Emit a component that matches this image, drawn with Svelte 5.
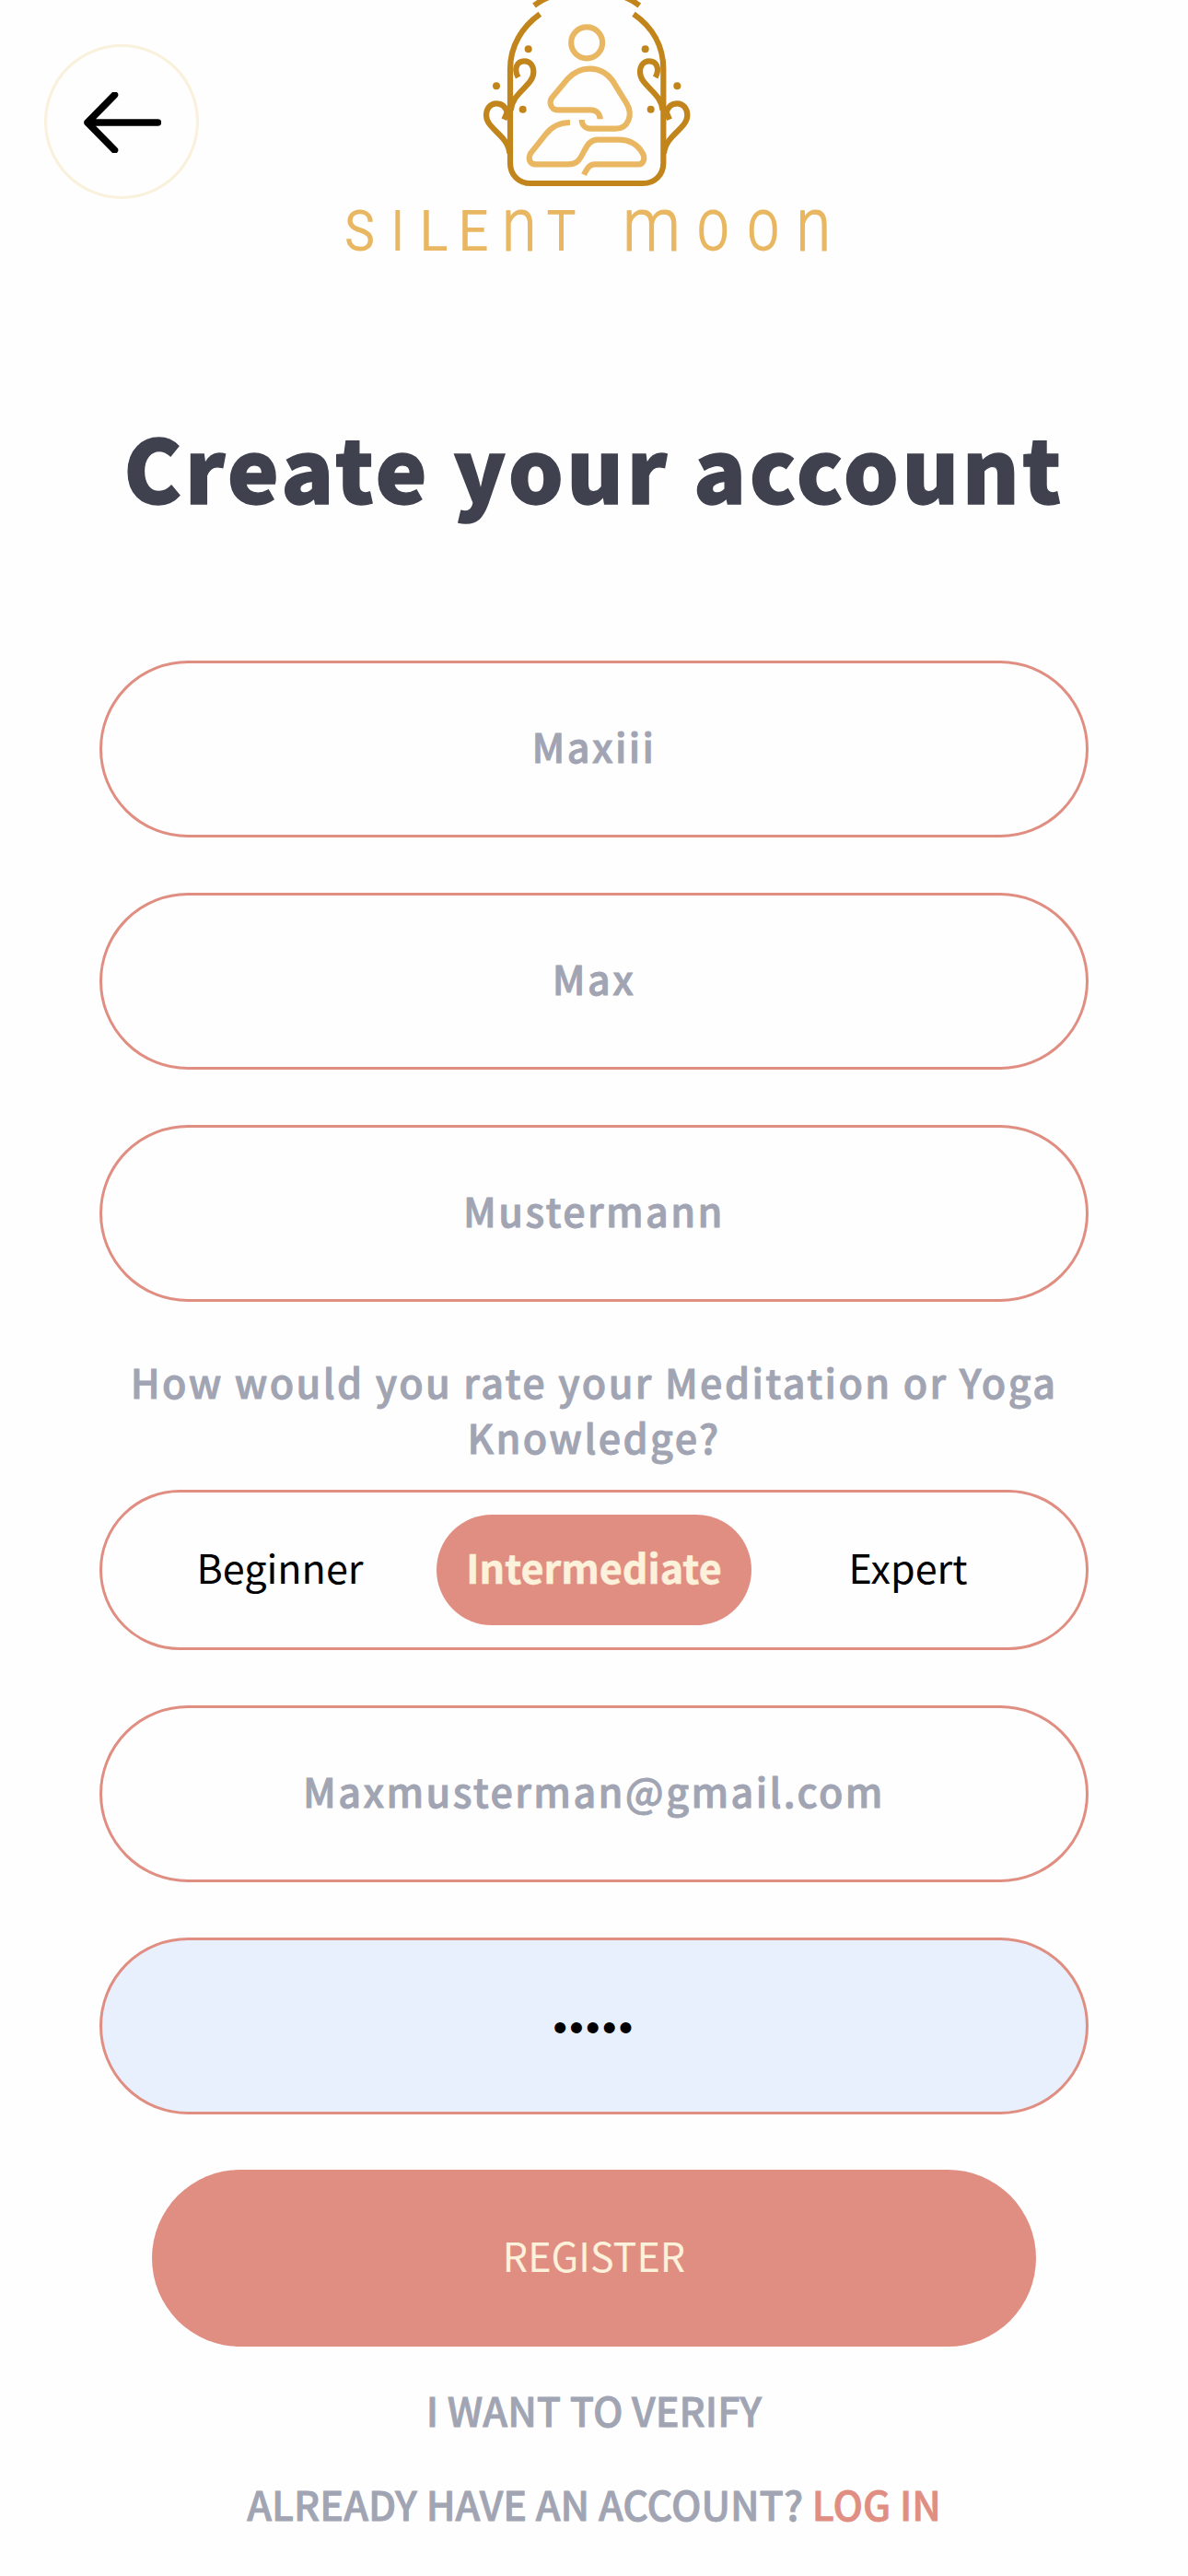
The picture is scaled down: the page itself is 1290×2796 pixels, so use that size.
<script>
  const letters = [
    { ch: 'S', x: 40.5, w: 33, size: 62 },
    { ch: 'I', x: 81.7, w: 14, size: 62 },
    { ch: 'L', x: 121, w: 31, size: 62 },
    { ch: 'E', x: 164, w: 33, size: 62 },
    { ch: 'n', x: 213.7, w: 38, size: 82 },
    { ch: 'T', x: 259.5, w: 32, size: 62 },
    { ch: 'm', x: 357.5, w: 63, size: 82 },
    { ch: 'O', x: 424.2, w: 36, size: 62 },
    { ch: 'O', x: 478.8, w: 36, size: 62 },
    { ch: 'n', x: 533.3, w: 38, size: 82 }
  ];
  const names = ['Maxiii', 'Max', 'Mustermann'];
  const levels = ['Beginner', 'Intermediate', 'Expert'];
  let level = $state('Intermediate');
</script>

<main>
  <header>
    <button class="back" aria-label="Back">
      <svg viewBox="0 0 84 66" width="84" height="66">
        <path d="M80.500 33H4M33.500 3L4 33L33.500 63" />
      </svg>
    </button>
    <svg class="logo" viewBox="0 0 570 290" width="570" height="290">
      <g transform="translate(150 0) scale(.33333)">
        <g class="dark">
          <path d="M259 46C200 88 162 150 162 225V530C162 570 190 597 228 597H595C632 597 661 570 661 530V225C661 150 625 88 564 46" />
          <path d="M240 18C262 2 275 -5 290 -10M583 18C561 2 548 -5 533 -10" />
          {#each ['', 'translate(823 0) scale(-1 1)'] as t}
            <g transform={t}>
              <path d="M188 252C172 222 185 199 208 199C228 199 238 215 238 235C238 280 168 300 164 360" />
              <path d="M142 389L152 366C146 345 132 337 117 337C97 337 84 353 84 375C84 420 156 440 160 500" />
              <circle class="dot" cx="221" cy="160" r="12" />
              <circle class="dot" cx="117" cy="280" r="12" />
              <circle class="dot" cx="203" cy="356" r="12" />
            </g>
          {/each}
        </g>
        <g class="light">
          <circle cx="411.500" cy="139" r="51" />
          <path d="M455 388C455 370 442 358 425 358H317C293 358 288 333 298 318L350 256C390 212 458 212 495 262L540 335C565 375 545 419 505 419H425C405 419 395 405 395 390" />
          <path d="M357 399C320 399 295 415 278 437L228 500C218 520 228 535 245 535H350C380 535 388 520 397 503C410 480 418 455 447 455H515C555 455 580 475 594 500C602 515 597 535 580 535H437C418 535 411 552 402 569" />
        </g>
      </g>
      {#each letters as l}
        <text class:small={l.size > 62} x={l.x} y="271.500" font-size={l.size} textLength={l.w} lengthAdjust="spacingAndGlyphs">{l.ch}</text>
      {/each}
    </svg>
  </header>

  <h1>Create your account</h1>

  <form>
    {#each names as name}
      <div class="field">{name}</div>
    {/each}
    <div class="rating">
      <p>How would you rate your Meditation or Yoga Knowledge?</p>
      <div class="levels">
        {#each levels as l}
          <button type="button" class:active={l === level} onclick={() => (level = l)}>{l}</button>
        {/each}
      </div>
    </div>
    <div class="field">Maxmusterman@gmail.com</div>
    <div class="field filled"><span>•••••</span></div>
    <button type="button" class="register">REGISTER</button>
  </form>

  <p class="link">I WANT TO VERIFY</p>
  <p class="link last">ALREADY HAVE AN ACCOUNT? <a href="#login">LOG IN</a></p>
</main>

<style>
  :global(body) { background: #fefefe; }
  main {
    width: 1290px;
    height: 2796px;
    overflow: hidden;
    background: #fefefe;
    font: 43.1px/60px 'Noto Sans CJK SC', sans-serif;
    color: #a1a4b2;
    text-align: center;
  }
  button {
    border: 0;
    background: none;
    font: inherit;
    color: #000;
    box-sizing: border-box;
  }
  header {
    display: flex;
    align-items: flex-start;
    height: 290px;
    padding-left: 48px;
  }
  .back {
    display: grid;
    place-content: center;
    width: 168px;
    height: 168px;
    margin: 48px 134px 0 0;
    padding: 2px 0 0 1px;
    border: 3px solid #faf1dc;
    border-radius: 50%;
  }
  .back path {
    fill: none;
    stroke: #000;
    stroke-width: 7.5;
    stroke-linecap: round;
    stroke-linejoin: round;
  }
  .logo path, .light circle { fill: none; stroke-width: 18.5; }
  .dark { stroke: #c2851b; }
  .dark .dot { fill: #c2851b; stroke: none; }
  .light { stroke: #e9b761; }
  .logo text {
    font-family: Roboto, sans-serif;
    font-weight: 400;
    fill: #e9b761;
    text-anchor: middle;
  }
  .logo .small {
    font-weight: 300;
    stroke: #e9b761;
    stroke-width: 1.2;
  }
  h1 {
    margin: 151px 0 0;
    height: 276px;
    font-size: 94.4px;
    line-height: 130px;
    font-weight: 900;
    letter-spacing: 3.5px;
    color: #3f414e;
    -webkit-text-stroke: 1.4px #3f414e;
  }
  form {
    display: flex;
    flex-direction: column;
    gap: 60px;
    margin: 0 108px;
  }
  .field {
    box-sizing: border-box;
    height: 192px;
    padding: 59px 0;
    border: 3px solid #e18e82;
    border-radius: 96px;
    font-weight: 500;
    letter-spacing: 2.4px;
    -webkit-text-stroke: 0.9px;
  }
  .filled {
    padding-top: 61px;
    background: #e8effd;
    color: #000;
    -webkit-text-stroke: 0;
  }
  .filled span {
    font-family: 'Liberation Sans', sans-serif;
    font-size: 44px;
  }
  .rating p {
    margin: -4px 0 28px;
    font-weight: 500;
    letter-spacing: 2.4px;
    -webkit-text-stroke: 0.9px;
  }
  .levels {
    box-sizing: border-box;
    display: grid;
    grid-template-columns: 340px 342px 340px;
    justify-content: center;
    align-items: center;
    height: 174px;
    border: 3px solid #e18e82;
    border-radius: 87px;
  }
  .levels button { height: 120px; padding: 0 0 8px; border-radius: 60px; }
  .levels .active {
    background: #e18e82;
    color: #fcf1da;
    font-weight: 700;
    -webkit-text-stroke: 0.5px;
  }
  .register {
    height: 192px;
    margin: 0 57px;
    padding: 0 0 8px;
    border-radius: 96px;
    background: #e18e82;
    color: #fcf1da;
  }
  .link {
    margin: 38px 0 0;
    font-weight: 500;
    -webkit-text-stroke: 0.8px;
  }
  .last { margin-top: 42px; }
  a { color: #e18e82; text-decoration: none; }
</style>
